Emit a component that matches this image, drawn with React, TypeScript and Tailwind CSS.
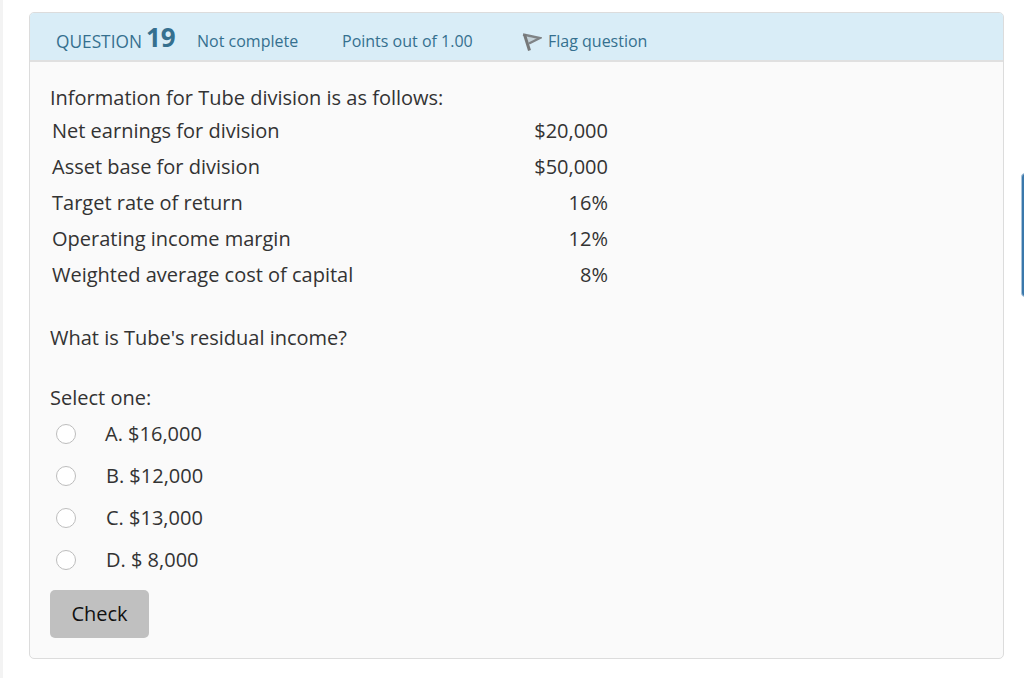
import React from "react";

const rows = [
  { label: "Net earnings for division", value: "$20,000" },
  { label: "Asset base for division", value: "$50,000" },
  { label: "Target rate of return", value: "16%" },
  { label: "Operating income margin", value: "12%" },
  { label: "Weighted average cost of capital", value: "8%" },
];

const options = [
  { text: "A. $16,000", pad: "pl-[29px]" },
  { text: "B. $12,000", pad: "pl-[30px]" },
  { text: "C. $13,000", pad: "pl-[30px]" },
  { text: "D. $ 8,000", pad: "pl-[30px]" },
];

export default function App() {
  return (
    <div className="relative w-[1024px] h-[678px] overflow-hidden bg-white font-['Open_Sans',sans-serif] pt-[12px] pl-[29px]">
      {/* left edge of the browser */}
      <div className="absolute left-0 top-0 h-full w-[3px] bg-[#f3f3f3]"></div>
      {/* slide-in tab on the right */}
      <div className="absolute left-[1021px] top-[173px] h-[124px] w-[6px] rounded-l-[4px] bg-[#3a78ab] border border-[#a9c3da]"></div>

      <div className="w-[975px] h-[647px] rounded-[5px] border border-[#dcdcdc] bg-[#fafafa] overflow-hidden">
        <div className="flex items-center h-[50px] bg-[#d9edf7] border-b-2 border-[#e0e0e0] -mt-px border-t-[#bce8f1] border-t pl-[26px] pt-[9px] text-[#35708f]">
          <div className="flex items-baseline w-[141px] -translate-y-px">
            <span className="text-[17.3px]">QUESTION</span>
            <span className="ml-[4px] text-[26px] leading-none font-bold -translate-y-px">19</span>
          </div>
          <span className="w-[145px] text-[16px]">Not complete</span>
          <span className="w-[180px] text-[16px]">Points out of 1.00</span>
          <svg width="20" height="20" viewBox="0 0 20 20" className="mr-[6px] mt-[3px]">
            <path d="M5 3.5 L15 5.5 L6.5 10 Z" fill="#c4d2d9" />
            <path d="M1 1.5 L18 5 L7 10.5" fill="none" stroke="#7f8386" strokeWidth="2.4" />
            <path d="M2.5 1.5 L7.5 17.5" fill="none" stroke="#767879" strokeWidth="3" />
          </svg>
          <span className="text-[16px]">Flag question</span>
        </div>

        <div className="pl-[20px] pt-[21px] text-[20px] text-[#333333]">
          <p className="h-[28px] leading-[28px] mt-px">Information for Tube division is as follows:</p>
          <div className="pl-[2px] pt-[1px]">
            {rows.map((r) => (
              <div key={r.label} className="flex h-[36px] items-center">
                <span className="w-[482px]">{r.label}</span>
                <span className="w-[74px] text-right">{r.value}</span>
              </div>
            ))}
          </div>
          <p className="mt-[31px] h-[28px] leading-[28px]">What is Tube's residual income?</p>
          <p className="mt-[32px] h-[28px] leading-[28px]">Select one:</p>
          <div className="pt-[1px]">
            {options.map((o) => (
              <div key={o.text} className="flex items-center h-[42px]">
                <span className="ml-[6px] h-[20px] w-[20px] shrink-0 rounded-full border border-[#bdbdbd] bg-white"></span>
                <span className={o.pad}>{o.text}</span>
              </div>
            ))}
          </div>
          <button className="mt-[9px] h-[48px] w-[99px] rounded-[5px] bg-[#c0c0c0] text-[20px] text-[#111111]">
            Check
          </button>
        </div>
      </div>
    </div>
  );
}
